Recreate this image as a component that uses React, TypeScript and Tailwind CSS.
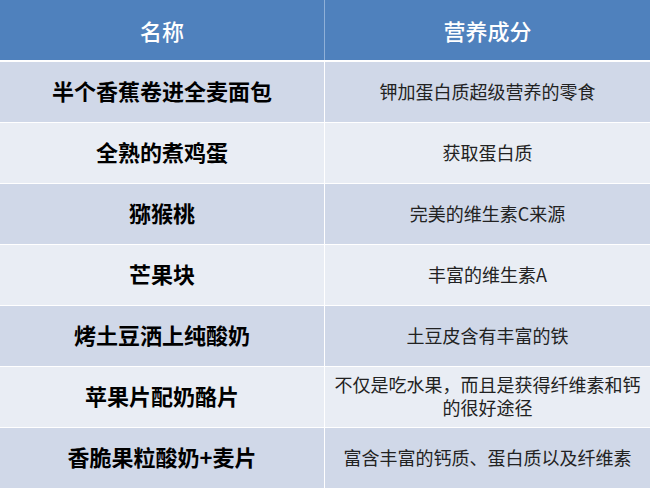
const ROWS: { name: string; value: string[] }[] = [
  { name: '半个香蕉卷进全麦面包', value: ['钾加蛋白质超级营养的零食'] },
  { name: '全熟的煮鸡蛋', value: ['获取蛋白质'] },
  { name: '猕猴桃', value: ['完美的维生素C来源'] },
  { name: '芒果块', value: ['丰富的维生素A'] },
  { name: '烤土豆洒上纯酸奶', value: ['土豆皮含有丰富的铁'] },
  { name: '苹果片配奶酪片', value: ['不仅是吃水果，而且是获得纤维素和钙', '的很好途径'] },
  { name: '香脆果粒酸奶+麦片', value: ['富含丰富的钙质、蛋白质以及纤维素'] },
];

const FONT = { fontFamily: '"Microsoft YaHei", "Noto Sans CJK SC", "Noto Sans", sans-serif' };

export default function App() {
  return (
    <div className="w-[650px] h-[488px] bg-white flex flex-col overflow-hidden" style={FONT}>
      {/* header */}
      <div className="grid grid-cols-[324px_1fr] gap-x-px h-[60px] mb-[2px] bg-[#8fb0d8]">
        <div className="flex items-center justify-center bg-[#4f81bd] text-white text-[22px] font-medium">名称</div>
        <div className="flex items-center justify-center bg-[#4f81bd] text-white text-[22px] font-medium">营养成分</div>
      </div>

      <div className="flex flex-col gap-px">
        {ROWS.map((r, i) => {
          const bg = i % 2 === 0 ? 'bg-[#d0d8e8]' : 'bg-[#e9edf4]';
          return (
            <div key={i} className="grid grid-cols-[324px_1fr] gap-x-px h-[60px]">
              <div className={`${bg} flex items-center justify-center pb-[4px] text-[22px] leading-[26px] font-bold text-black`}>
                {r.name}
              </div>
              <div className={`${bg} flex flex-col items-center justify-center pb-[2px] text-center text-[18px] leading-[23px] text-[#222]`}>
                {r.value.map(line => (
                  <span key={line} className="block">{line}</span>
                ))}
              </div>
            </div>
          );
        })}
      </div>
    </div>
  );
}
